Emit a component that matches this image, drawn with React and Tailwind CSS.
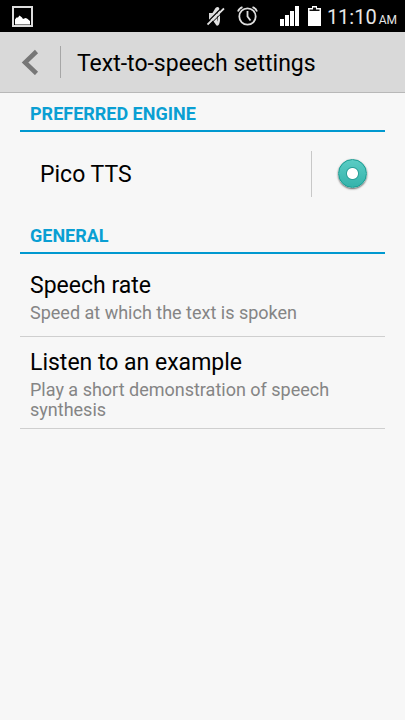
import { useState } from 'react';

const preferences = [
  { id: 'rate', title: 'Speech rate', summary: 'Speed at which the text is spoken' },
  { id: 'example', title: 'Listen to an example', summary: 'Play a short demonstration of speech synthesis' },
];

const PictureIcon = () => (
  <svg width="21" height="21" viewBox="0 0 21 21" aria-hidden="true">
    <rect x="1" y="1" width="19" height="19" fill="none" stroke="#dcdcdc" strokeWidth="2" />
    <path d="M3 18.500V13.500L4.500 11.500L6 11.500L7.500 9.500L10 11.500L11 13L13.500 12L15 12.500L18 15V18.500Z" fill="#fff" />
  </svg>
);

const MutedIcon = () => (
  <svg width="18" height="20" viewBox="0 0 18 20" aria-hidden="true">
    <path d="M2 7H6V14H2Z" fill="#d8d8d8" />
    <path d="M5.500 7L8.500 2Q12.500 -1 13 6V14Q12.500 20.500 9.500 19.500L5.500 14Z" fill="#e0e0e0" />
    <path d="M10 5Q11 5 11 9V11Q11 15 10 15.500Z" fill="#555" />
    <path d="M0 16.500L16 0.500" stroke="#000" strokeWidth="1.200" />
    <path d="M0.500 18.500L17 2.500" stroke="#e0e0e0" strokeWidth="1.800" />
    <path d="M2 19.500L18 3.800" stroke="#000" strokeWidth="1" />
  </svg>
);

const AlarmIcon = () => (
  <svg width="21" height="20" viewBox="0 0 21 20" fill="none" stroke="#dedede" aria-hidden="true">
    <circle cx="10.500" cy="10.500" r="8.200" strokeWidth="1.800" />
    <path d="M10.500 5V10.500L13.500 14.500" strokeWidth="1.800" />
    <path d="M1 5.500Q2 2.500 5.500 1.200M20 5.500Q19 2.500 15.500 1.200" strokeWidth="1.800" />
  </svg>
);

const SignalIcon = () => (
  <svg width="20" height="20" viewBox="0 0 20 20" fill="#fff" aria-hidden="true">
    <path d="M0 13H4V20H0ZM5 9H9V20H5ZM10 5H14V20H10ZM15 0H19V20H15Z" />
  </svg>
);

const BatteryIcon = () => (
  <svg width="13" height="20" viewBox="0 0 13 20" aria-hidden="true">
    <path d="M4 0H9V2H13V20H0V2H4Z" fill="#fff" />
    <path d="M5 1.500H8V3.500H11.500V5H1.500V3.500H5Z" fill="#111" />
  </svg>
);

const StatusBar = () => (
  <div className="flex h-8 items-center bg-black pl-3 pr-2 text-white">
    <PictureIcon />
    <div className="ml-auto flex items-center">
      <MutedIcon />
      <span className="ml-3"><AlarmIcon /></span>
      <span className="ml-5 pl-0.5"><SignalIcon /></span>
      <span className="ml-2"><BatteryIcon /></span>
      <p className="ml-1.5 flex items-baseline gap-0.5 pt-0.5 text-[#e6e6e6]">
        <span className="text-[20px]/[24px]">11:10</span>
        <span className="text-[12px]">AM</span>
      </p>
    </div>
  </div>
);

const SectionTitle = ({ children }) => (
  <h2 className="border-b-2 border-[#0099d0] px-2.5 pt-[9px] pb-1 text-[18px]/[24px] font-bold text-[#0a9fd3] uppercase">
    {children}
  </h2>
);

export default function App() {
  const [engine, setEngine] = useState('pico');

  return (
    <div className="min-h-screen bg-[#f7f7f7] font-[Roboto,sans-serif] text-black">
      <StatusBar />
      <header className="flex h-[61px] items-center border-b border-[#b8b8b8] bg-[#d9d9d9] pl-5">
        <button type="button" aria-label="Back" className="pr-5">
          <svg width="20" height="26" viewBox="0 0 20 26" aria-hidden="true">
            <path d="M16.500 2.500L5 13.500L16.500 24.500" fill="none" stroke="#777" strokeWidth="4.500" />
          </svg>
        </button>
        <span className="h-8 w-px bg-[#a6a6a6]" />
        <h1 className="ml-4 pt-1 text-[23px]/[28px]">Text-to-speech settings</h1>
      </header>

      <main className="px-5">
        <section>
          <SectionTitle>Preferred engine</SectionTitle>
          <label className="flex h-[83px] items-center pl-5 text-[23px]/[28px]">
            <span className="flex-1 pt-0.5">Pico TTS</span>
            <span className="h-[46px] w-px bg-[#c8c8c8]" />
            <input
              type="radio"
              name="engine"
              value="pico"
              checked={engine === 'pico'}
              onChange={e => setEngine(e.target.value)}
              className="mr-[18px] ml-[26px] size-[29px] appearance-none rounded-full border border-[#16998f] bg-[radial-gradient(circle,#fff_5px,#2b9f98_6px,transparent_7px),linear-gradient(#5accc4,#35b3ab)] shadow-[0_1px_2px_rgba(0,0,0,0.6)]"
            />
          </label>
        </section>

        <section>
          <SectionTitle>General</SectionTitle>
          {preferences.map(pref => (
            <button
              key={pref.id}
              type="button"
              className="flex min-h-[83px] w-full flex-col justify-center gap-[3px] border-b border-[#cfcfcf] px-2.5 pt-3 pb-2 text-left"
            >
              <span className="text-[23px]/[28px]">{pref.title}</span>
              <span className="text-[18px]/[20px] text-[#858585]">{pref.summary}</span>
            </button>
          ))}
        </section>
      </main>
    </div>
  );
}
